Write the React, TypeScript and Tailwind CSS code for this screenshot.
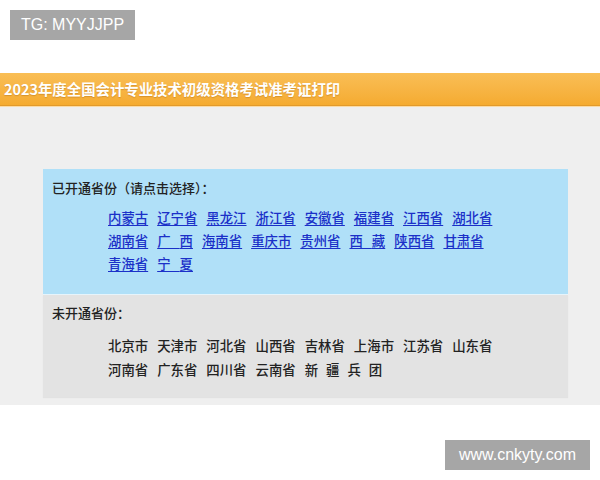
const cjk = "font-['Noto_Sans_CJK_SC','Noto_Sans',sans-serif]"

const opened: string[][] = [
    ["内蒙古", "辽宁省", "黑龙江", "浙江省", "安徽省", "福建省", "江西省", "湖北省"],
    ["湖南省", "广西", "海南省", "重庆市", "贵州省", "西藏", "陕西省", "甘肃省"],
    ["青海省", "宁夏"],
]

const closed: string[][] = [
    ["北京市", "天津市", "河北省", "山西省", "吉林省", "上海市", "江苏省", "山东省"],
    ["河南省", "广东省", "四川省", "云南省", "新疆兵团"],
]

// two-char names are spread to the width of three
const Spread = ({name}: { name: string }) => {
    if (name.length === 2) {
        return (
            <span>
                <span className={"tracking-[9px]"}>{name[0]}</span>
                {name[1]}
            </span>
        )
    }
    if (name.length === 4) {
        return (
            <span>
                {name.slice(0, 3).split("").map((c, i) => (
                    <span key={i} className={"tracking-[8px]"}>{c}</span>
                ))}
                {name[3]}
            </span>
        )
    }
    return <span>{name}</span>
}

export default function App() {
    return (
        <div className={`relative w-[600px] h-[480px] bg-white overflow-hidden ${cjk}`}>
            <TgBadge/>
            <Header/>
            <div className={"bg-[#efefef] pt-[62px] pb-[8px] pl-[43px] pr-[32px]"}>
                <OpenedBox/>
                <ClosedBox/>
            </div>
            <div
                className={"absolute left-[445px] top-[440px] w-[145px] h-[30px] bg-[#a6a6a6] text-white text-[16px] flex items-center justify-center font-['Liberation_Sans',sans-serif]"}>
                www.cnkyty.com
            </div>
        </div>
    )
}

const TgBadge = () => {
    return (
        <div className={"pt-[10px] pl-[10px] h-[73px]"}>
            <div
                className={"w-[125px] h-[30px] bg-[#a6a6a6] text-white text-[16px] flex items-center justify-center font-['Liberation_Sans',sans-serif]"}>
                TG: MYYJJPP
            </div>
        </div>
    )
}

const Header = () => {
    return (
        <div>
            <div
                className={"h-[32px] bg-gradient-to-b from-[#f9be55] to-[#f5ab30] flex items-center pl-[4px] text-white text-[14.4px] font-bold [text-shadow:0_1px_1px_rgba(120,60,0,0.25)]"}>
                2023年度全国会计专业技术初级资格考试准考证打印
            </div>
            <div className={"h-[1px] bg-[#e29a2c]"}/>
            <div className={"h-[1px] bg-[#fbdba6]"}/>
        </div>
    )
}

const OpenedBox = () => {
    return (
        <div className={"bg-[#b0e0f8] border-b border-[#e6f4fb] h-[126px] pt-[9px] pl-[9px]"}>
            <div className={"text-[13px] leading-[20px] text-[#222] font-medium"}>已开通省份（请点击选择）：</div>
            <div className={"mt-[8px] pl-[56px]"}>
                {opened.map((row, r) => (
                    <div key={r} className={"flex gap-[9px] leading-[23px] text-[13.4px] font-medium"}>
                        {row.map((p) => (
                            <a key={p} href={"#"}
                               className={"text-[#1b30c8] underline underline-offset-[2px] decoration-[#1b30c8]"}>
                                <Spread name={p}/>
                            </a>
                        ))}
                    </div>
                ))}
            </div>
        </div>
    )
}

const ClosedBox = () => {
    return (
        <div className={"bg-[#e3e3e3] h-[102px] pt-[8px] pl-[9px] shadow-[0_1px_1px_rgba(0,0,0,0.05)]"}>
            <div className={"text-[13px] leading-[20px] text-[#222] font-medium"}>未开通省份：</div>
            <div className={"mt-[10px] pl-[56px]"}>
                {closed.map((row, r) => (
                    <div key={r} className={"flex gap-[9px] leading-[24px] text-[13.4px] text-[#222] font-medium"}>
                        {row.map((p) => (
                            <span key={p}><Spread name={p}/></span>
                        ))}
                    </div>
                ))}
            </div>
        </div>
    )
}
